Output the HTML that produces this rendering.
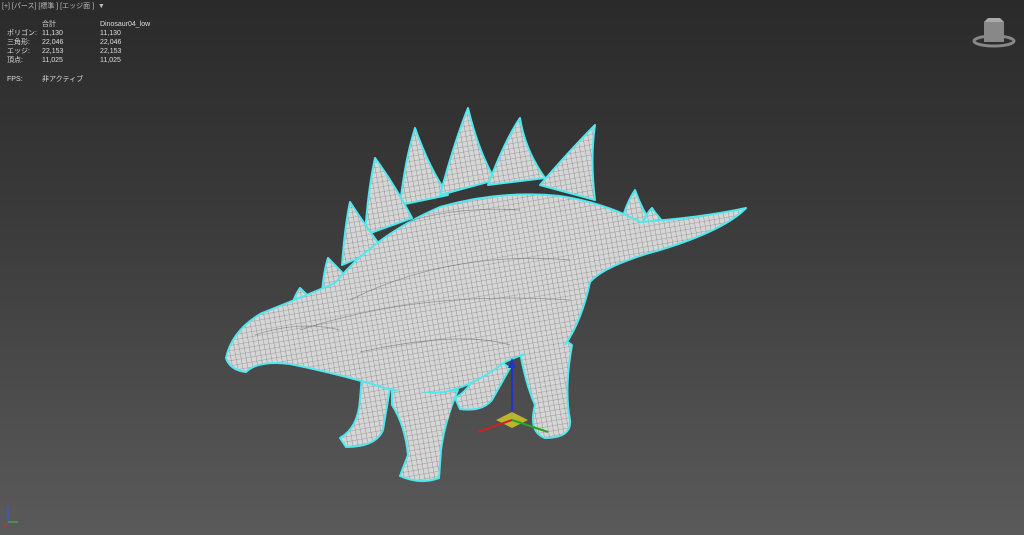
<!DOCTYPE html>
<html><head><meta charset="utf-8"><style>
body{margin:0;width:1024px;height:535px;overflow:hidden;background:linear-gradient(#2a2a2a,#3a3a3a 40%,#5a5a5a);font-family:"Liberation Sans","Noto Sans CJK JP",sans-serif;color:#ddd}
.t{position:absolute;font-size:7px;line-height:9px;white-space:nowrap}
</style></head><body>
<div class="t" style="left:2px;top:2px;color:#bbb">[+] [パース] [標準 ] [エッジ面 ]&nbsp; ▼</div>
<div class="t" style="left:42px;top:20px">合計</div><div class="t" style="left:100px;top:20px">Dinosaur04_low</div>
<div class="t" style="left:7px;top:29px">ポリゴン:</div><div class="t" style="left:42px;top:29px">11,130</div><div class="t" style="left:100px;top:29px">11,130</div>
<div class="t" style="left:7px;top:38px">三角形:</div><div class="t" style="left:42px;top:38px">22,046</div><div class="t" style="left:100px;top:38px">22,046</div>
<div class="t" style="left:7px;top:47px">エッジ:</div><div class="t" style="left:42px;top:47px">22,153</div><div class="t" style="left:100px;top:47px">22,153</div>
<div class="t" style="left:7px;top:56px">頂点:</div><div class="t" style="left:42px;top:56px">11,025</div><div class="t" style="left:100px;top:56px">11,025</div>
<div class="t" style="left:7px;top:75px">FPS:</div><div class="t" style="left:42px;top:75px">非アクティブ</div>
<svg width="1024" height="535" style="position:absolute;left:0;top:0">
<defs><pattern id="g" width="5" height="5" patternUnits="userSpaceOnUse" patternTransform="rotate(-10)"><rect width="5" height="5" fill="#d6d6d6"/><path d="M0 0H5M0 0V5" stroke="#6a6a6a" stroke-width="0.6"/></pattern></defs>
<g fill="url(#g)" stroke="#4ee8ee" stroke-width="2" stroke-linejoin="round">
<path d="M490,355 L510,368 L492,400 Q482,412 460,409 L455,398 Q470,390 476,372Z"/>
<path d="M362,375 L390,388 L383,430 Q376,447 346,447 L340,438 Q358,428 360,400Z"/>
<path d="M400,205 Q405,160 415,128 Q430,170 448,195Z"/>
<path d="M440,195 Q455,140 468,108 Q478,150 495,180Z"/>
<path d="M488,185 Q505,140 520,118 Q525,150 545,178Z"/>
<path d="M540,185 Q570,150 595,125 Q590,160 595,200Z"/>
<path d="M365,235 Q368,190 375,158 Q395,185 412,218Z"/>
<path d="M342,265 Q345,225 350,202 Q365,225 382,248Z"/>
<path d="M322,292 Q324,270 328,258 Q340,270 352,283Z"/>
<path d="M292,305 Q295,295 300,288 Q308,296 315,302Z"/>
<path d="M620,228 Q625,205 635,190 Q642,210 652,224Z"/>
<path d="M640,230 Q645,215 652,208 Q660,220 670,228Z"/>
<path d="M518,340 Q545,325 572,345 Q564,390 570,420 Q572,438 545,438 Q528,432 535,405 Q524,380 518,340Z"/>
<path d="M392,380 Q430,395 458,390 Q445,420 441,450 L439,478 Q420,485 400,476 L408,455 Q405,425 392,405Z"/>
<path d="M226,358 Q232,330 262,313 Q300,298 335,283 Q375,235 440,207 Q500,190 560,196 Q605,203 640,222 Q700,218 746,208 Q725,230 660,250 Q605,265 590,282 Q582,320 565,345 Q530,350 505,362 Q475,385 445,392 Q405,396 372,384 Q330,372 290,364 Q258,360 246,372 Q230,370 226,358Z"/>
</g>
<g fill="url(#g)">
<path d="M522,342 Q545,330 568,347 Q562,370 560,380 L530,380Z"/>
<path d="M396,384 Q430,398 455,393 Q450,410 448,420 L405,418Z"/>
</g>
<g fill="none" stroke="#555" stroke-width="0.8" opacity=".5">
<path d="M380,232Q440,205 520,210M350,300Q450,250 570,260M360,352Q460,330 510,345M300,330Q420,290 570,300M255,335Q300,320 340,330"/>
</g>
<line x1="512" y1="420" x2="512" y2="365" stroke="#2233cc" stroke-width="2"/>
<polygon points="508,368 516,368 512,358" fill="#2233cc"/>
<polygon points="496,420 512,412 528,420 512,428" fill="#c8c02a" opacity=".9"/>
<line x1="512" y1="420" x2="478" y2="432" stroke="#cc2222" stroke-width="2"/>
<line x1="512" y1="420" x2="548" y2="432" stroke="#22aa22" stroke-width="2"/>
<line x1="8" y1="522" x2="8" y2="506" stroke="#3355ff"/><line x1="8" y1="522" x2="18" y2="522" stroke="#3c3"/><line x1="8" y1="522" x2="4" y2="527" stroke="#c33"/>
<ellipse cx="994" cy="41" rx="20" ry="5" fill="none" stroke="#888" stroke-width="3"/>
<rect x="984" y="22" width="20" height="20" fill="#888"/><polygon points="984,22 1004,22 1000,18 988,18" fill="#aaa"/>
</svg>
</body></html>
